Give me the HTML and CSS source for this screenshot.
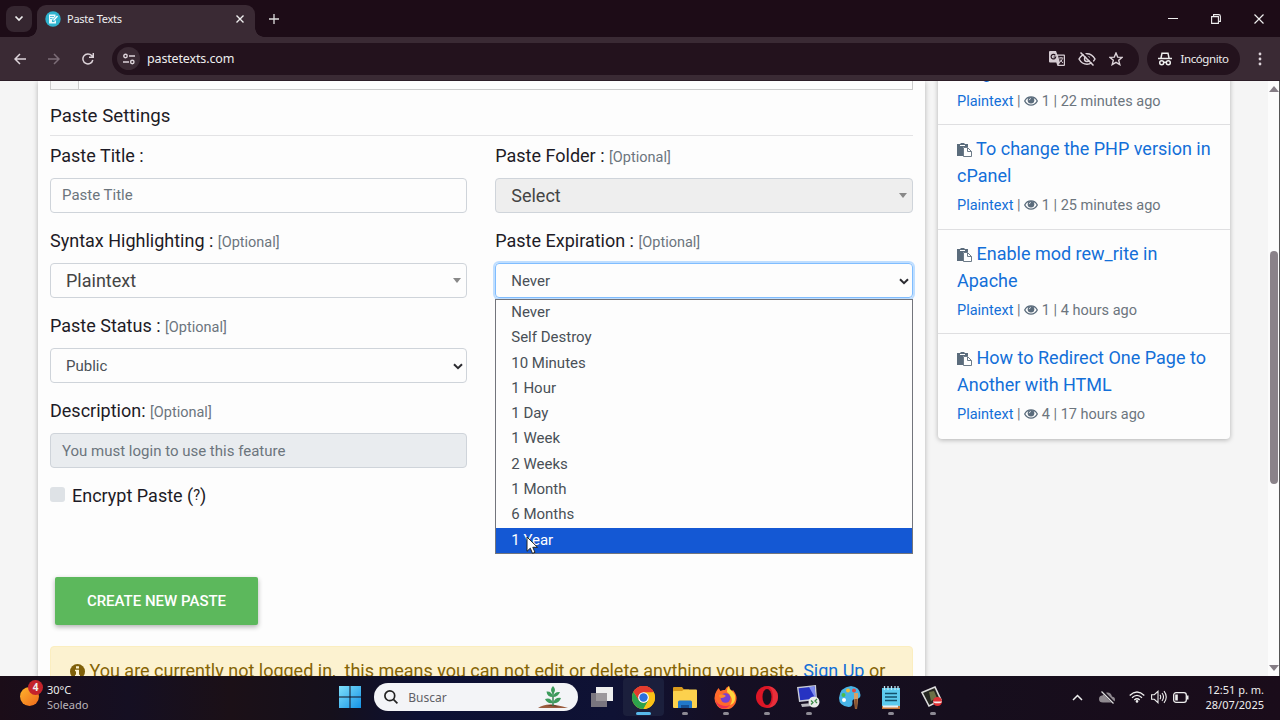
FILE: index.html
```html
<!DOCTYPE html>
<html lang="es">
<head>
  <meta charset="UTF-8">
  <title>Paste Texts</title>
  <link rel="stylesheet" href="styles.css">
</head>
<body>

<!-- shared icons -->
<svg width="0" height="0" style="display:none">
  <symbol id="paste" viewBox="0 0 15 14">
    <path fill="#5b6c7c" d="M0 1h3.5V0h4v1H11v3H6v9H0z"/>
    <path fill="#fff" d="M3 2h5v1H3z"/>
    <path fill="#fff" stroke="#6d7b88" d="M6.5 4.500h4l4 4v5h-8z"/>
    <path fill="none" stroke="#6d7b88" d="M10.500 4.500v4h4"/>
  </symbol>
  <symbol id="eye" viewBox="0 0 14 10">
    <path fill="#fdfdfd" stroke="#5b6c7c" stroke-width="1.300" d="M.7 5C3.500-.4 10.500-.4 13.300 5 10.500 10.400 3.500 10.400.7 5z"/>
    <circle cx="7" cy="4.300" r="3.300" fill="#5b6c7c"/>
    <path fill="none" stroke="#dde2e6" stroke-width=".9" d="M5.200 4.200Q5.300 2.600 7 2.500"/>
  </symbol>
  <symbol id="chev" viewBox="0 0 10 7">
    <path fill="none" stroke="#2b2b30" stroke-width="2" d="M1 1.200l4 4 4-4"/>
  </symbol>
</svg>

<div class="tabs">
  <div class="tabsearch"><svg width="10" height="7" viewBox="0 0 10 7"><path fill="none" stroke="#eee" stroke-width="1.700" d="M1.500 1.500L5 5l3.500-3.500"/></svg></div>
  <div class="tab">
    <svg width="16" height="16" viewBox="0 0 16 16"><circle cx="8" cy="8" r="7.700" fill="#2fb4cf"/><path fill="#e8fbff" d="M4 3.500h6.500v2L7 9v2h2l2-2v3.500H4z"/><path stroke="#fff" stroke-width="1.300" d="M8.500 9.500l4-4.500"/><path stroke="#2fb4cf" stroke-width=".8" d="M5 5.500h4M5 7.500h2.500"/></svg>
    <span class="tabname">Paste Texts</span>
    <svg width="8" height="8" viewBox="0 0 8 8"><path stroke="#eee" stroke-width="1.400" d="M.5.5l7 7M7.500.5l-7 7"/></svg>
  </div>
  <svg class="plus" width="10" height="10" viewBox="0 0 10 10"><path stroke="#ddd" stroke-width="1.300" d="M5 0v10M0 5h10"/></svg>
  <div class="winbtns">
    <svg width="10" height="10" viewBox="0 0 10 10"><path stroke="#eee" d="M0 4.500h10"/></svg>
    <svg width="10" height="10" viewBox="0 0 10 10"><path fill="none" stroke="#eee" stroke-width="1.100" d="M.6 2.600h6.800v6.800H.6zM2.600 2V.6h5q1.800 0 1.800 1.800v5H8"/></svg>
    <svg width="10" height="10" viewBox="0 0 10 10"><path stroke="#eee" stroke-width="1.200" d="M.5.5l9 9M9.500.5l-9 9"/></svg>
  </div>
</div>

<div class="toolbar">
  <svg class="nav" width="12" height="12" viewBox="0 0 12 12"><path fill="none" stroke="#ddd4da" stroke-width="1.500" d="M12 6H1M6 1L1 6l5 5"/></svg>
  <svg class="nav" width="12" height="12" viewBox="0 0 12 12"><path fill="none" stroke="#7c6d77" stroke-width="1.500" d="M0 6h11M6 1l5 5-5 5"/></svg>
  <svg class="nav" width="12" height="12" viewBox="0 0 12 12"><path fill="none" stroke="#ddd4da" stroke-width="1.500" d="M10.800 7A5 5 0 1 1 9.700 2.600L11 4M11.300 0v4.300H7"/></svg>
  <div class="omnibox">
    <div class="tune"><svg width="12" height="12" viewBox="0 0 12 12"><g fill="none" stroke="#ddd4da" stroke-width="1.400"><circle cx="2.500" cy="3" r="1.700"/><path d="M6 3h6M0 9h6"/><circle cx="9.300" cy="9" r="1.700"/></g></svg></div>
    <span class="url">pastetexts.com</span>
    <svg class="tr" width="16" height="15" viewBox="0 0 16 15"><path fill="#d5cbd2" d="M1 0h6l1.300 3.500H15q1 0 1 1V14q0 1-1 1H8.500L7.300 11.500H1q-1 0-1-1V1q0-1 1-1z"/><path fill="#23121d" d="M9 4.700h5.800v9H9.500l1.500-2z"/><path fill="none" stroke="#23121d" stroke-width="1.200" d="M6.300 4.300A2.300 2.300 0 1 0 6.700 6H4.600"/><path fill="none" stroke="#d5cbd2" d="M9.800 7h4.600M12 6v1M13.500 7.500q-1 3-3 4M11 8.500l3 3.500"/></svg>
    <svg width="18" height="14" viewBox="0 0 18 14"><path fill="none" stroke="#ddd4da" stroke-width="1.500" d="M1 7Q4 1.700 9 1.700T17 7Q14 12.300 9 12.300T1 7z"/><circle cx="9" cy="7" r="2.500" fill="none" stroke="#ddd4da" stroke-width="1.400"/><path stroke="#23121d" stroke-width="2" d="M4.500 0l12 12"/><path stroke="#ddd4da" stroke-width="1.500" d="M2.500.5l13 13"/></svg>
    <svg width="14" height="14" viewBox="0 0 14 14"><path fill="none" stroke="#ddd4da" stroke-width="1.400" d="M7 1l1.700 4.100 4.400.3-3.400 2.900 1.100 4.300L7 10.300l-3.800 2.300 1.100-4.300L.9 5.400l4.400-.3z"/></svg>
  </div>
  <div class="incog">
    <svg width="14" height="14" viewBox="0 0 14 14"><g fill="none" stroke="#eee" stroke-width="1.500"><path d="M0 6.500h14M3 6l1-4.800h6L11 6"/><circle cx="3.700" cy="10.700" r="2"/><circle cx="10.300" cy="10.700" r="2"/><path d="M5.700 10.300h2.600"/></g></svg>
    <span>Incógnito</span>
  </div>
  <svg class="dots" width="4" height="14" viewBox="0 0 4 14"><g fill="#ddd4da"><circle cx="2" cy="2" r="1.400"/><circle cx="2" cy="7" r="1.400"/><circle cx="2" cy="12" r="1.400"/></g></svg>
</div>

<div class="page">
  <div class="card main">
    <div class="editor"><div class="gutter"></div></div>
    <h2 class="heading">Paste Settings</h2>
    <div class="cols">
      <div class="col">
        <div class="label">Paste Title :</div>
        <div class="box text">Paste Title</div>
        <div class="label">Syntax Highlighting : <small>[Optional]</small></div>
        <div class="box select2">Plaintext<i class="arrow"></i></div>
        <div class="label">Paste Status : <small>[Optional]</small></div>
        <div class="box select low">Public<svg class="chev"><use href="#chev"/></svg></div>
        <div class="label">Description: <small>[Optional]</small></div>
        <div class="box text disabled low">You must login to use this feature</div>
        <div class="label check"><span class="checkbox"></span>Encrypt Paste (<small class="q">?</small>)</div>
      </div>
      <div class="col">
        <div class="label">Paste Folder : <small>[Optional]</small></div>
        <div class="box select2 grey">Select<i class="arrow"></i></div>
        <div class="label">Paste Expiration : <small>[Optional]</small></div>
        <div class="box select focus low">Never<svg class="chev"><use href="#chev"/></svg>
          <div class="menu">
            <div>Never</div>
            <div>Self Destroy</div>
            <div>10 Minutes</div>
            <div>1 Hour</div>
            <div>1 Day</div>
            <div>1 Week</div>
            <div>2 Weeks</div>
            <div>1 Month</div>
            <div>6 Months</div>
            <div class="hover">1 Year
              <svg class="cursor" width="13" height="19" viewBox="0 0 13 19"><path fill="#fff" stroke="#222" d="M1 1v14.300l3.300-3.100 2.200 5.200 2.500-1.100-2.200-5h4.700z"/></svg>
            </div>
          </div>
        </div>
      </div>
    </div>
    <div class="create">CREATE NEW PASTE</div>
    <div class="alert"><svg width="15" height="15" viewBox="0 0 15 15"><circle cx="7.500" cy="7.500" r="7.500" fill="#7f600a"/><path fill="#fcf2d0" d="M6 2.300h3v2.200H6zM5 5.700h4v5h1v1.600H5v-1.600h1V7.300H5z"/></svg> You are currently not logged in,&nbsp; this means you can not edit or delete anything you paste. <a>Sign Up</a> or</div>
  </div>

  <div class="card side">
    <div class="item">
      <div class="title"><svg class="pi"><use href="#paste"/></svg> Ping for<br>long</div>
      <div class="meta"><a>Plaintext</a> | <svg class="ei"><use href="#eye"/></svg> 1 | 22 minutes ago</div>
    </div>
    <div class="item">
      <div class="title"><svg class="pi"><use href="#paste"/></svg> To change the PHP version in cPanel</div>
      <div class="meta"><a>Plaintext</a> | <svg class="ei"><use href="#eye"/></svg> 1 | 25 minutes ago</div>
    </div>
    <div class="item">
      <div class="title"><svg class="pi"><use href="#paste"/></svg> Enable mod rew_rite in Apache</div>
      <div class="meta"><a>Plaintext</a> | <svg class="ei"><use href="#eye"/></svg> 1 | 4 hours ago</div>
    </div>
    <div class="item">
      <div class="title"><svg class="pi"><use href="#paste"/></svg> How to Redirect One Page to Another with HTML</div>
      <div class="meta"><a>Plaintext</a> | <svg class="ei"><use href="#eye"/></svg> 4 | 17 hours ago</div>
    </div>
  </div>

  <div class="scroll">
    <i class="up"></i>
    <div class="thumb"></div>
    <i class="down"></i>
  </div>
</div>

<div class="taskbar">
  <div class="weather">
    <div class="sun"><span class="badge">4</span></div>
    <div><div class="deg">30°C</div><div class="sky">Soleado</div></div>
  </div>
  <div class="apps">
    <div class="app"><svg width="22" height="22" viewBox="0 0 22 22"><defs><linearGradient id="win" x2="1" y2="1"><stop stop-color="#7fe0fb"/><stop offset="1" stop-color="#1593e6"/></linearGradient></defs><path fill="url(#win)" d="M0 0h10.500v10.500H0zM11.500 0H22v10.500H11.500zM0 11.500h10.500V22H0zM11.500 11.500H22V22H11.500z"/></svg></div>
    <div class="search">
      <svg width="14" height="14" viewBox="0 0 14 14"><g fill="none" stroke="#222" stroke-width="1.700"><circle cx="5.800" cy="5.800" r="4.900"/><path d="M9.400 9.400L13.400 13.400"/></g></svg>
      <span>Buscar</span>
      <svg class="plant" width="30" height="22" viewBox="0 0 30 22"><path fill="#9a5b3e" d="M0 22q5-3.500 12-3.500T30 22z"/><path fill="#6e3c2b" d="M9 19.500q6-2 12 1.500z"/><path fill="none" stroke="#2e7c4a" stroke-width="1.400" d="M15 20V4"/><path fill="#3d9b5c" d="M15 8q-4-4 0-8 4 4 0 8zM15 11q-6 0-6.500-5.500Q14 5 15 11zM15 11q5 0 7-5-6-.5-7 5zM15 17q-6 1-8-4 6-2 8 4zM15 17q6 1 8-5-6-1-8 5z"/></svg>
    </div>
    <div class="app"><svg width="24" height="22" viewBox="0 0 24 22"><path fill="#eee" d="M6 1h17v14H6z"/><path fill="#8d888d" opacity=".85" d="M1 7h16v14H1z"/></svg></div>
    <div class="app active"><svg width="23" height="23" viewBox="0 0 24 24"><circle cx="12" cy="12" r="12" fill="#fbc116"/><path fill="#e33b2e" d="M12 12L1.600 6A12 12 0 0 1 22.400 6z"/><path fill="#2da14c" d="M12 24A12 12 0 0 1 1.600 6L7.300 14.700 12 18l5-3z"/><path fill="#e33b2e" d="M12 6.500H22.700A12 12 0 0 0 1.600 6L7 14.500z"/><path fill="#fbc116" d="M12 6.500h10.700A12 12 0 0 1 12 24l5-9z"/><circle cx="12" cy="12" r="5.600" fill="#fff"/><circle cx="12" cy="12" r="4.400" fill="#2d70dc"/></svg></div>
    <div class="app open"><svg width="24" height="21" viewBox="0 0 24 21"><path fill="#d99a1c" d="M1 0h8l2 2.500h5V8H0V1q0-1 1-1z"/><path fill="#fcd14d" d="M0 5q0-1 1-1h8l2-1.500h12q1 0 1 1V20q0 1-1 1H1q-1 0-1-1z"/><path fill="#2178c9" d="M5 21v-6q0-1.500 1.500-1.500h11q1.500 0 1.500 1.500v6z"/><path fill="#164f92" d="M8 18h8v3H8z"/></svg></div>
    <div class="app open"><svg width="23" height="23" viewBox="0 0 23 23"><path fill="#ff6a2b" d="M2.500 5l2-3 2 3Q9 3.500 11 4 12 1 15 0q0 3 3 5l1-1q4 5 3.500 9A11 11 0 0 1 .5 12Q.5 8 2.500 5z"/><path fill="#ffd43c" d="M15 0q0 3 3 5 4 3 3 9-1 4-5 5 3-4 1-8-1-3-4-5 0-4 2-6z"/><path fill="#f0314f" d="M1 9q0 8 6 10 5 2 9 0-3 4-8 3.500Q1 20 1 9z"/><circle cx="11.500" cy="12" r="4.800" fill="#7a3fd0"/><path fill="#ff8a2a" d="M5 9q4-2 7 1-2 2-4.500 2Q5 12 5 9z"/></svg></div>
    <div class="app open"><svg width="22" height="22" viewBox="0 0 22 22"><circle cx="11" cy="11" r="11" fill="#dc1626"/><path fill="#f0414a" d="M11 0q11 1 11 11T11 22q6-2 6-11T11 0z" opacity=".6"/><ellipse cx="11" cy="11" rx="4.500" ry="8" fill="#15101f"/></svg></div>
    <div class="app open"><svg width="23" height="24" viewBox="0 0 23 24"><path fill="#c9ccd6" d="M0 2l19-2 1 15-18 2z"/><path fill="#2733c2" d="M1.500 3.300L17.700 1.500l.8 12-15.300 1.800z"/><path fill="#7f8df0" d="M12 2l5.700-.5.8 12z"/><path fill="#b9b9bf" d="M4 19l12-1v3L5 22z"/><circle cx="17" cy="17" r="5.500" fill="#e9ece9"/><path fill="none" stroke="#3c8b45" stroke-width="1.300" d="M14 15.500l2 2-2 2M20 14l-2 2 2 2"/></svg></div>
    <div class="app"><svg width="22" height="23" viewBox="0 0 22 23"><path fill="#48b4e6" d="M12 0q9 1 9.500 9 0 4-5 4-4 0-3 4 0 4-4 4Q0 20 0 12 1 1 12 0z"/><circle cx="5" cy="14" r="2" fill="#fff"/><circle cx="4.500" cy="9" r="2" fill="#4dbd4b"/><circle cx="9" cy="4.500" r="2" fill="#f3bb33"/><circle cx="15" cy="4.500" r="2" fill="#e24943"/><path fill="#d9a066" d="M15 7h4v6l-1 10h-2l-1-10z"/><path fill="#8a5330" d="M15.500 13h3l-.7 10h-1.600z"/></svg></div>
    <div class="app open"><svg width="18" height="23" viewBox="0 0 18 23"><path fill="#5dcbee" d="M0 2h18v18H0z"/><path fill="#c9793a" d="M0 20h18v3H0z"/><path fill="#eee" d="M1 19.500h15v2H1z"/><path stroke="#12516c" stroke-width="1.500" d="M3 7.500h12M3 11h12M3 14.500h12"/><path stroke="#bfe9f6" stroke-width="1.300" d="M2.500 0v4M6 0v4M9.500 0v4M13 0v4M16 0v4"/></svg></div>
    <div class="app open"><svg width="22" height="22" viewBox="0 0 22 22"><path fill="#252721" stroke="#ddd" stroke-width="1.600" d="M1 6.500L14 1l6 13L8 20z"/><path fill="#6b7046" d="M8 6l5-1 3 7-6 3z"/><circle cx="16.500" cy="15.500" r="4.500" fill="#e13034"/><path fill="#eee" d="M12 15.500h9q0 1.800-4.500 1.800T12 15.500z"/></svg></div>
  </div>
  <div class="tray">
    <svg width="11" height="7" viewBox="0 0 11 7"><path fill="none" stroke="#eee" stroke-width="1.500" d="M1 6l4.500-4.500L10 6"/></svg>
    <svg width="16" height="13" viewBox="0 0 16 13"><path fill="#8f898f" d="M4 11.500Q0 11.500 0 8t3.500-3.500Q5 1.500 8.500 1.500T13 5.500q3 .5 3 3t-3 3z"/><path stroke="#170e1b" stroke-width="3" d="M3 0l12 12"/><path stroke="#ddd" stroke-width="1.200" d="M2.500.5l12 12"/></svg>
    <svg width="16" height="12" viewBox="0 0 16 12"><g fill="none" stroke="#eee" stroke-width="1.300"><path d="M.7 4.500Q8-2.500 15.300 4.500M3 6.700Q8 2 13 6.700M5.300 9Q8 6.500 10.700 9"/></g><circle cx="8" cy="10.400" r="1.300" fill="#eee"/></svg>
    <svg width="16" height="14" viewBox="0 0 16 14"><g fill="none" stroke="#eee" stroke-width="1.100"><path d="M.6 4.700h2.700L7 1.300v11.400L3.300 9.300H.6zM9 4.800q1.400 2.200 0 4.400M11 3q3 4 0 8M13 1.200q4.500 5.800 0 11.600"/></g></svg>
    <svg width="16" height="11" viewBox="0 0 16 11"><rect x=".7" y=".7" width="12.600" height="9.600" rx="2.300" fill="none" stroke="#eee" stroke-width="1.300"/><path fill="#eee" d="M2.200 2.500h2.600v6H2.200zM14 3.500h1.500v4H14z"/></svg>
    <div class="clock">12:51 p. m.<br>28/07/2025</div>
  </div>
</div>

</body>
</html>
```
FILE: styles.css
```css
* {
    box-sizing: border-box;
}
body {
    margin: 0;
    width: 1280px;
    height: 720px;
    overflow: hidden;
    display: flex;
    flex-direction: column;
    font-family: "Roboto", sans-serif;
    font-size: 18px;
    color: #1d1b26;
    background: #f5f5f5;
}
svg {
    flex: none;
}

/* browser */
.tabs, .toolbar, .taskbar {
    font-family: "Noto Sans", sans-serif;
    color: #eee;
    flex: none;
    display: flex;
    align-items: center;
}
.tabs {
    height: 37px;
    background: #1d0c17;
}
.tabsearch {
    width: 26px;
    height: 26px;
    margin-left: 6px;
    border-radius: 8px;
    background: #352630;
    display: flex;
    align-items: center;
    justify-content: center;
}
.tab {
    width: 218px;
    height: 32px;
    align-self: flex-end;
    margin-left: 5px;
    padding: 0 11px 5px 8px;
    border-radius: 9px 9px 0 0;
    background: #3a2a34;
    display: flex;
    align-items: center;
    position: relative;
}
/* curved feet of the tab */
.tab:before, .tab:after {
    content: "";
    position: absolute;
    bottom: 0;
    width: 9px;
    height: 9px;
}
.tab:before {
    left: -9px;
    background: radial-gradient(circle at 0 0, transparent 8.5px, #3a2a34 9px);
}
.tab:after {
    right: -9px;
    background: radial-gradient(circle at 100% 0, transparent 8.5px, #3a2a34 9px);
}
.tabname {
    flex: 1;
    margin-left: 6px;
    font-size: 11px;
    letter-spacing: -.25px;
}
.plus {
    margin-left: 14px;
}
.winbtns {
    margin-left: auto;
    margin-right: 16px;
    display: flex;
    gap: 33px;
}
.toolbar {
    height: 44px;
    background: #3a2a34;
    border-bottom: 1px solid #2c1d27;
}
.nav {
    margin-left: 14px;
    margin-right: 8px;
}
.omnibox {
    width: 1027px;
    height: 32px;
    margin-left: 10px;
    padding: 0 16px 0 5px;
    border-radius: 16px;
    background: #23121d;
    display: flex;
    align-items: center;
    gap: 13px;
}
.tune {
    width: 23px;
    height: 23px;
    border-radius: 50%;
    background: #3a2a34;
    display: flex;
    align-items: center;
    justify-content: center;
}
.tr {
    margin-right: 0;
}
.url {
    flex: 1;
    margin-left: -6px;
    font-size: 12.5px;
    letter-spacing: -.15px;
}
.incog {
    width: 93px;
    height: 32px;
    margin-left: 8px;
    border-radius: 16px;
    background: #23121d;
    display: flex;
    align-items: center;
    justify-content: center;
    gap: 8px;
    font-size: 11.5px;
    letter-spacing: -.4px;
}
.dots {
    margin-left: 18px;
}

/* page */
.page {
    height: 594.5px;
    flex: none;
    overflow: hidden;
    display: flex;
    align-items: flex-start;
}
.card {
    background: #fdfdfd;
    box-shadow: 0 1px 5px rgba(0,0,0,.28);
}
.main {
    width: 887px;
    height: 640px;
    margin-left: 38px;
    padding: 0 12.5px 0 12px;
    flex: none;
}
.editor {
    height: 9px;
    border: 1px solid #ccc;
    border-top: 0;
}
.gutter {
    width: 28px;
    height: 8px;
    background: #f7f7f7;
    border-right: 1px solid #ccc;
}
.heading {
    margin: 0;
    height: 46px;
    padding-top: 12px;
    font-size: 18.7px;
    font-weight: 400;
    line-height: 28px;
    border-bottom: 1px solid #e3e3e5;
}
.cols {
    display: flex;
    gap: 28px;
}
.col {
    flex: 1;
}
.label {
    height: 50px;
    padding-top: 14px;
    line-height: 28px;
}
.col > .label:first-child {
    height: 42px;
    padding-top: 6px;
}
.label small {
    font-size: 14.5px;
    color: #6c757d;
}
.label .q {
    color: #1d1b26;
}
.box {
    height: 35px;
    line-height: 33px;
    border: 1px solid #cfd4da;
    border-radius: 4px;
    font-size: 15px;
    color: #495057;
    display: flex;
    align-items: center;
    justify-content: space-between;
    position: relative;
}
.text {
    padding-left: 11px;
    color: #6c757d;
}
.disabled {
    background: #e9ecef;
}
.select, .select2 {
    padding-left: 15px;
}
.low {
    padding-top: 1px;
}
.select2 {
    font-size: 18px;
    color: #444;
}
.grey {
    background: #eee;
}
.arrow {
    margin-right: 5px;
    border: 4px solid transparent;
    border-top: 5px solid #888;
    border-bottom: 0;
}
.chev {
    width: 10px;
    height: 7px;
    margin-right: 3px;
}
.focus {
    border-color: #80bdff;
    box-shadow: 0 0 0 2px #bfdeff;
}
.menu {
    position: absolute;
    top: 35px;
    left: -1px;
    width: 418px;
    height: 255px;
    border: 1px solid #73757c;
    background: #fdfdfd;
    z-index: 2;
}
.menu div {
    height: 25.3px;
    line-height: 25px;
    padding-left: 15px;
}
.menu .hover {
    background: #1458d4;
    color: #fff;
    position: relative;
}
.cursor {
    position: absolute;
    left: 30px;
    top: 8px;
}
.check {
    display: flex;
}
.checkbox {
    width: 15px;
    height: 15px;
    margin: 5px 7px 0 0;
    border-radius: 3px;
    background: #dee2e6;
}
.create {
    width: 203px;
    height: 48px;
    margin: 59px 0 0 5px;
    border-radius: 2px;
    background: #5cb85c;
    color: #fff;
    font-size: 15px;
    font-weight: 500;
    line-height: 48px;
    text-align: center;
    box-shadow: 0 2px 5px rgba(0,0,0,.3);
}
.alert {
    margin-top: 21px;
    height: 60px;
    padding: 10px 0 0 19px;
    line-height: 27px;
    white-space: nowrap;
    border: 1px solid #fbeec0;
    border-radius: 4px;
    background: #fcf2d0;
    color: #856404;
}
.alert svg {
    vertical-align: -2px;
}
a {
    color: #136fd8;
}
.alert a {
    text-decoration: underline;
}

.side {
    width: 292px;
    margin: -60.500px 0 0 13px;
    border-radius: 4px;
    flex: none;
}
.item {
    height: 104.500px;
    padding: 10px 15px 0 19px;
    border-bottom: 1px solid #dfdfe1;
}
.item:last-child {
    border: 0;
}
.title {
    color: #136fd8;
    line-height: 27px;
}
.pi {
    width: 15px;
    height: 14px;
    vertical-align: -2px;
}
.meta {
    margin-top: 5px;
    font-size: 14.5px;
    line-height: 24px;
    color: #6c757d;
}
.ei {
    width: 14px;
    height: 10px;
}
.scroll {
    width: 12px;
    height: 595px;
    margin-left: auto;
    background: #fcfcfc;
    border-right: 1px solid #555;
    display: flex;
    flex-direction: column;
    align-items: center;
}
.up, .down {
    border: 5px solid transparent;
}
.up {
    margin-top: 5px;
    border-top: 0;
    border-bottom: 6px solid #857d85;
}
.down {
    margin: auto 0 5px;
    border-bottom: 0;
    border-top: 6px solid #857d85;
}
.thumb {
    width: 8px;
    height: 233px;
    margin-top: 159px;
    border-radius: 4px;
    background: #8a8289;
}

/* taskbar */
.taskbar {
    height: 44.5px;
    padding-bottom: 1px;
    background: linear-gradient(90deg, #1b0d18, #150f22 10%, #1b1017 18%, #15101c 26%, #0c1033 33%, #0f1234 48%, #150f24 56%, #160e1d 75%, #1a0c1a);
}
.weather {
    width: 329px;
    padding-left: 20px;
    display: flex;
    gap: 8px;
    font-size: 11px;
    line-height: 15px;
}
.sun {
    width: 19px;
    height: 19px;
    margin-top: 5px;
    border-radius: 50%;
    background: linear-gradient(135deg, #ffb52c, #ee681c);
    position: relative;
}
.badge {
    position: absolute;
    left: 8px;
    top: -7px;
    width: 15px;
    height: 15px;
    border-radius: 50%;
    background: #c4232b;
    font-size: 10px;
    font-weight: 700;
    text-align: center;
}
.sky {
    color: #bbb5bb;
}
.apps {
    display: flex;
    align-items: center;
}
.app {
    width: 41.3px;
    height: 43px;
    display: flex;
    align-items: center;
    justify-content: center;
    position: relative;
}
.active {
    background: #1b1f3c;
    border-radius: 4px;
    height: 38px;
}
.open:after, .active:after {
    content: "";
    position: absolute;
    left: 18px;
    bottom: 4px;
    width: 6px;
    height: 3px;
    border-radius: 2px;
    background: #8d8a94;
}
.active:after {
    left: 13px;
    bottom: 1px;
    width: 15px;
    background: #58b9ec;
}
.search {
    width: 204px;
    height: 28px;
    margin: 0 3px 0 4px;
    padding: 0 10px;
    border-radius: 14px;
    background: #f3f4f7;
    color: #5f5f66;
    font-size: 12px;
    display: flex;
    align-items: center;
    gap: 10px;
}
.plant {
    margin-left: auto;
}
.tray {
    margin-left: auto;
    padding-right: 16px;
    display: flex;
    align-items: center;
    gap: 6px;
}
.tray svg:nth-child(1) {
    margin-right: 10px;
}
.tray svg:nth-child(2) {
    margin-right: 8px;
}
.clock {
    margin-left: 10px;
    font-size: 11px;
    line-height: 15px;
    text-align: right;
}
```
